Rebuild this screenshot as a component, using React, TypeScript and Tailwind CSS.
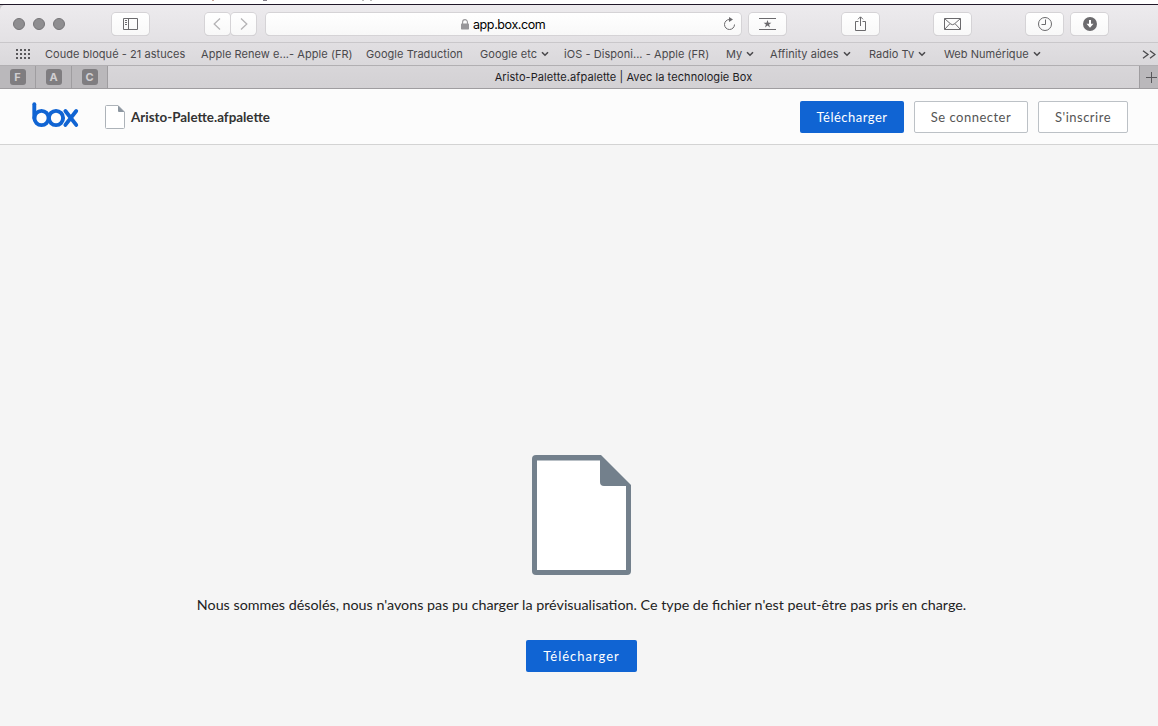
import type { ReactNode } from "react";
import clsx from "clsx";

const bookmarks = [
  { label: "Coude bloqué - 21 astuces", box: "w-[156px]", menu: false },
  { label: "Apple Renew e...- Apple (FR)", box: "w-[165px]", menu: false },
  { label: "Google Traduction", box: "w-[114px]", menu: false },
  { label: "Google etc", box: "w-[84px]", menu: true },
  { label: "iOS - Disponi... - Apple (FR)", box: "w-[162px]", menu: false },
  { label: "My", box: "w-[44px]", menu: true },
  { label: "Affinity aides", box: "w-[99px]", menu: true },
  { label: "Radio Tv", box: "w-[75px]", menu: true },
  { label: "Web Numérique", box: "w-[110px]", menu: true },
];

const pinnedTabs = ["F", "A", "C"];

function ToolbarButton({ className, children }: { className?: string; children?: ReactNode }) {
  return (
    <button
      className={clsx(
        "flex h-[22px] shrink-0 items-center justify-center rounded-[4px] bg-linear-to-b from-white to-[#f8f8f8] text-[#6b6a6d] shadow-[0_0_0_1px_#d5d3d6,0_1px_0_0_#c6c4c7]",
        className,
      )}
    >
      {children}
    </button>
  );
}

function BoxLogo() {
  return (
    <svg
      className="mb-1 ml-8 shrink-0"
      width="47"
      height="26"
      viewBox="0 0 47 26"
      fill="none"
      stroke="#1064d3"
      strokeWidth="3.9"
      strokeLinecap="round"
      strokeLinejoin="round"
    >
      <path d="M2.3 2.2V16" />
      <circle cx="9.5" cy="16" r="7.1" />
      <circle cx="24" cy="16" r="7.1" />
      <path d="M33.4 9 44.2 22.9M44.2 9 33.4 22.9" />
    </svg>
  );
}

function Toolbar() {
  return (
    <div className="flex h-[38px] shrink-0 items-center rounded-tl-[5px] border-b border-[#c9c7ca] bg-linear-to-b from-[#edebee] to-[#e3e1e4] pt-px">
      <div className="ml-[13px] flex w-[99px] gap-2">
        <span className="size-3 rounded-full border border-[#757477] bg-[#8e8d90]" />
        <span className="size-3 rounded-full border border-[#757477] bg-[#8e8d90]" />
        <span className="size-3 rounded-full border border-[#757477] bg-[#8e8d90]" />
      </div>
      <ToolbarButton className="w-[37px]">
        <svg width="15" height="12" viewBox="0 0 15 12" fill="none" stroke="currentColor">
          <path d="M.5.5h14v11H.5zM5.5.5v11M2 2.5h2M2 4.5h2M2 6.5h2" />
        </svg>
      </ToolbarButton>
      <div className="ml-14 flex gap-px">
        <ToolbarButton className="w-[25px] pr-[2px] text-[#b4b3b5]">
          <svg width="8" height="12" viewBox="0 0 8 12" fill="none" stroke="currentColor" strokeWidth="1.3">
            <path d="M7 .5 1.2 6 7 11.5" />
          </svg>
        </ToolbarButton>
        <ToolbarButton className="w-[25px] pl-px text-[#b4b3b5]">
          <svg width="8" height="12" viewBox="0 0 8 12" fill="none" stroke="currentColor" strokeWidth="1.3">
            <path d="M1 .5 6.8 6 1 11.5" />
          </svg>
        </ToolbarButton>
      </div>
      <div className="ml-[10px] flex h-[22px] w-[475px] shrink-0 items-center rounded-[4px] bg-linear-to-b from-white to-[#f8f8f8] shadow-[0_0_0_1px_#d5d3d6,0_1px_0_0_#c6c4c7]">
        <svg className="ml-[195px]" width="8" height="11" viewBox="0 0 8 11" fill="none">
          <rect y="4.5" width="8" height="6" rx=".7" fill="#98979a" />
          <path d="M1.6 5V3a2.4 2.4 0 0 1 4.8 0v2" stroke="#98979a" strokeWidth="1.1" />
        </svg>
        <span className="ml-1 pt-[2px] text-[12.5px] leading-none tracking-[-0.4px] text-black">app.box.com</span>
        <svg className="mr-[5px] mb-px ml-auto text-[#6b6a6d]" width="13" height="14" viewBox="0 0 13 14" fill="none">
          <path d="M7 2.5H6.5a5 5 0 1 0 5 5" stroke="currentColor" />
          <path d="M6 0v5l4-2.5z" fill="currentColor" />
        </svg>
      </div>
      <ToolbarButton className="ml-2 w-[37px]">
        <svg width="17" height="12" viewBox="0 0 17 12">
          <path d="M0 .5h17M0 11.5h17" stroke="currentColor" />
          <path
            d="m8.5 2 1 2.8h2.9l-2.3 1.7.9 2.9-2.5-1.8L6 9.4l.9-2.9-2.3-1.7h2.9z"
            fill="currentColor"
          />
        </svg>
      </ToolbarButton>
      <ToolbarButton className="ml-14 w-[37px]">
        <svg className="mb-px" width="11" height="15" viewBox="0 0 11 15" fill="none" stroke="currentColor">
          <path d="M3.5 5.5h-3v9h10v-9h-3M5.5 10V1M3 3.3 5.5.8 8 3.3" />
        </svg>
      </ToolbarButton>
      <ToolbarButton className="ml-[55px] w-[37px]">
        <svg width="17" height="12" viewBox="0 0 17 12" fill="none" stroke="currentColor">
          <path d="M.5.5h16v11H.5zM.7.7l6 5.3q1.8 1.4 3.6 0l6-5.3M.7 11.3 6 5.6M16.3 11.3 11 5.6" />
        </svg>
      </ToolbarButton>
      <ToolbarButton className="ml-[55px] w-[37px]">
        <svg width="14" height="14" viewBox="0 0 14 14" fill="none" stroke="currentColor">
          <circle cx="7" cy="7" r="6.5" />
          <path d="M7.5 2.5v5h-4" />
        </svg>
      </ToolbarButton>
      <ToolbarButton className="ml-2 w-[37px]">
        <svg width="14" height="14" viewBox="0 0 14 14">
          <circle cx="7" cy="7" r="7" fill="currentColor" />
          <path d="M6 3h2v3.7h2.5L7 10.7 3.5 6.7H6z" fill="#fff" />
        </svg>
      </ToolbarButton>
    </div>
  );
}

function BookmarkBar() {
  return (
    <div className="flex h-[23px] shrink-0 items-center border-b border-[#b1afb2] bg-linear-to-b from-[#e1dfe2] to-[#dad8db] text-[11px] leading-none tracking-[0.05px] text-[#4a494c]">
      <div className="ml-4 grid w-[29px] shrink-0 grid-cols-[repeat(4,2px)] gap-x-[2px] gap-y-[2px]">
        {Array.from({ length: 12 }, (_, i) => (
          <span key={i} className="size-[2px] bg-[#59585b]" />
        ))}
      </div>
      {bookmarks.map((item) => (
        <span key={item.label} className={clsx("flex shrink-0 items-center whitespace-nowrap", item.box)}>
          {item.label}
          {item.menu && (
            <svg className="ml-1" width="8" height="6" viewBox="0 0 8 6" fill="none">
              <path d="M1 1.2 4 4.2 7 1.2" stroke="currentColor" strokeWidth="1.6" />
            </svg>
          )}
        </span>
      ))}
      <svg className="mr-[2px] ml-auto" width="14" height="9" viewBox="0 0 14 9" fill="none">
        <path d="M1 .8 6 4.5 1 8.2M8 .8l5 3.7-5 3.7" stroke="currentColor" strokeWidth="1.3" />
      </svg>
    </div>
  );
}

function TabBar() {
  return (
    <div className="flex h-[23px] shrink-0 border-b border-[#9f9da0] bg-linear-to-b from-[#d8d6d9] to-[#d3d1d4]">
      {pinnedTabs.map((tab) => (
        <div
          key={tab}
          className="flex w-9 items-center justify-center border-r border-[#9f9da0] bg-[#bab8bb]"
        >
          <span className="flex size-4 items-center justify-center rounded-[3px] bg-[#7f7d80] text-[11px] leading-none font-bold text-[#d0ced1]">
            {tab}
          </span>
        </div>
      ))}
      <div className="flex flex-1 items-center justify-center text-[11px] leading-none tracking-[0.08px] text-[#1d1c1f]">
        Aristo-Palette.afpalette | Avec la technologie Box
      </div>
      <div className="flex w-[19px] items-center justify-end border-l border-[#9f9da0] bg-[#bab8bb]">
        <svg width="12" height="11" viewBox="0 0 12 11" stroke="#59585b">
          <path d="M0 5.5h11M5.5 0v11" />
        </svg>
      </div>
    </div>
  );
}

function FileHeader() {
  return (
    <header className="flex h-14 shrink-0 items-center border-b border-[#d3d3d3] bg-[#fcfcfc] pr-[30px]">
      <BoxLogo />
      <svg className="ml-[26px]" width="20" height="24" viewBox="0 0 20 24">
        <path d="M1.5.5H13L19.5 7v15.5a1 1 0 0 1-1 1h-17a1 1 0 0 1-1-1v-21a1 1 0 0 1 1-1z" fill="#fff" stroke="#adb3b9" />
        <path d="M13 .5 19.5 7H14a1 1 0 0 1-1-1z" fill="#8c96a0" />
      </svg>
      <span className="ml-[6px] text-[13.4px] leading-5 font-bold text-[#333]">Aristo-Palette.afpalette</span>
      <div className="ml-auto flex gap-[10px] text-[13px] tracking-[0.5px]">
        <button className="h-8 w-[104px] rounded-[2px] bg-[#1064d3] pt-[2px] text-white">Télécharger</button>
        <button className="h-8 w-[114px] rounded-[2px] border border-[#bcc1c6] bg-white pt-[2px] text-[#555]">
          Se connecter
        </button>
        <button className="h-8 w-[90px] rounded-[2px] border border-[#bcc1c6] bg-white pt-[2px] text-[#555]">
          S'inscrire
        </button>
      </div>
    </header>
  );
}

function PreviewError() {
  return (
    <main className="flex flex-1 flex-col items-center bg-[#f5f5f5] pt-[310px] pl-[5px]">
      <svg width="99" height="120" viewBox="0 0 99 120">
        <path d="M4 0h65l30 30v86a4 4 0 0 1-4 4H4a4 4 0 0 1-4-4V4a4 4 0 0 1 4-4z" fill="#73808c" />
        <path d="M5 5.5h63V27a4 4 0 0 0 4 4h22v84H5z" fill="#fff" />
      </svg>
      <p className="mt-5 text-[14.3px] leading-5 whitespace-nowrap text-[#222]">
        Nous sommes désolés, nous n'avons pas pu charger la prévisualisation. Ce type de fichier n'est peut-être pas
        pris en charge.
      </p>
      <button className="mt-[25px] h-8 w-[111px] rounded-[2px] bg-[#1064d3] pt-[2px] text-[13px] tracking-[1px] text-white">
        Télécharger
      </button>
    </main>
  );
}

export default function App() {
  return (
    <div className="flex h-[726px] w-[1158px] flex-col overflow-hidden bg-white font-['Lato',sans-serif]">
      <div className="flex h-[5px] shrink-0 items-start border-b border-[#21192a]">
        <span className="ml-[212px] h-px w-[2px] bg-[#c9a99c]" />
        <span className="ml-[49px] h-px w-1 bg-[#85808c]" />
        <span className="ml-[95px] h-px w-[2px] bg-[#bbb]" />
        <span className="ml-[6px] h-px w-[2px] bg-[#bbb]" />
      </div>
      <div className="flex shrink-0 flex-col bg-[#c9c7ca] font-['Inter',sans-serif]">
        <Toolbar />
        <BookmarkBar />
        <TabBar />
      </div>
      <FileHeader />
      <PreviewError />
    </div>
  );
}
